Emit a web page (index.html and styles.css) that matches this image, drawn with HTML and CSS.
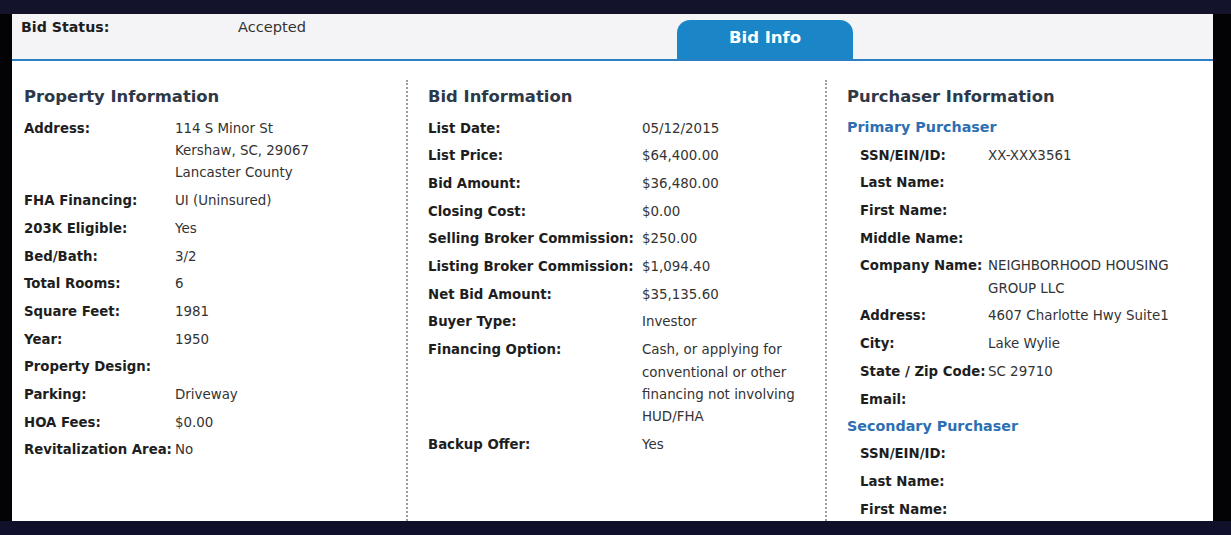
FILE: index.html
```html
<!DOCTYPE html>
<html lang="en">
  <head>
    <meta charset="UTF-8" />
    <meta name="viewport" content="width=device-width, initial-scale=1.0" />
    <title>Bid Info</title>
    <link rel="stylesheet" href="styles.css">
  </head>
  <body>
    <div class="screen">
      <header class="status-bar">
        <div class="status">
          <span class="status-label">Bid Status:</span>
          <span class="status-value">Accepted</span>
        </div>
        <div class="tab">Bid Info</div>
      </header>

      <main class="columns">
        <!-- Property -->
        <section class="col col-property">
          <h2>Property Information</h2>
          <dl class="rows">
            <dt>Address:</dt>
            <dd>114 S Minor St<br>Kershaw, SC, 29067<br>Lancaster County</dd>
            <dt>FHA Financing:</dt>
            <dd>UI (Uninsured)</dd>
            <dt>203K Eligible:</dt>
            <dd>Yes</dd>
            <dt>Bed/Bath:</dt>
            <dd>3/2</dd>
            <dt>Total Rooms:</dt>
            <dd>6</dd>
            <dt>Square Feet:</dt>
            <dd>1981</dd>
            <dt>Year:</dt>
            <dd>1950</dd>
            <dt>Property Design:</dt>
            <dd></dd>
            <dt>Parking:</dt>
            <dd>Driveway</dd>
            <dt>HOA Fees:</dt>
            <dd>$0.00</dd>
            <dt>Revitalization Area:</dt>
            <dd>No</dd>
          </dl>
        </section>

        <!-- Bid -->
        <section class="col col-bid">
          <h2>Bid Information</h2>
          <dl class="rows">
            <dt>List Date:</dt>
            <dd>05/12/2015</dd>
            <dt>List Price:</dt>
            <dd>$64,400.00</dd>
            <dt>Bid Amount:</dt>
            <dd>$36,480.00</dd>
            <dt>Closing Cost:</dt>
            <dd>$0.00</dd>
            <dt>Selling Broker Commission:</dt>
            <dd>$250.00</dd>
            <dt>Listing Broker Commission:</dt>
            <dd>$1,094.40</dd>
            <dt>Net Bid Amount:</dt>
            <dd>$35,135.60</dd>
            <dt>Buyer Type:</dt>
            <dd>Investor</dd>
            <dt>Financing Option:</dt>
            <dd>Cash, or applying for<br>conventional or other<br>financing not involving<br>HUD/FHA</dd>
            <dt>Backup Offer:</dt>
            <dd>Yes</dd>
          </dl>
        </section>

        <!-- Purchaser -->
        <section class="col col-purchaser">
          <h2>Purchaser Information</h2>
          <h3>Primary Purchaser</h3>
          <dl class="rows">
            <dt>SSN/EIN/ID:</dt>
            <dd>XX-XXX3561</dd>
            <dt>Last Name:</dt>
            <dd></dd>
            <dt>First Name:</dt>
            <dd></dd>
            <dt>Middle Name:</dt>
            <dd></dd>
            <dt>Company Name:</dt>
            <dd>NEIGHBORHOOD HOUSING<br>GROUP LLC</dd>
            <dt>Address:</dt>
            <dd>4607 Charlotte Hwy Suite1</dd>
            <dt>City:</dt>
            <dd>Lake Wylie</dd>
            <dt>State / Zip Code:</dt>
            <dd>SC 29710</dd>
            <dt>Email:</dt>
            <dd></dd>
          </dl>
          <h3>Secondary Purchaser</h3>
          <dl class="rows">
            <dt>SSN/EIN/ID:</dt>
            <dd></dd>
            <dt>Last Name:</dt>
            <dd></dd>
            <dt>First Name:</dt>
            <dd></dd>
          </dl>
        </section>
      </main>
    </div>
  </body>
</html>
```

FILE: styles.css
```css
html,
body {
  height: 535px;
  overflow: hidden;
}

body {
  margin: 0;
  box-sizing: border-box;
  background: #030306;
  border-top: 14px solid #13132b;
  border-bottom: 14px solid #10102a;
  font-family: "DejaVu Sans", Verdana, sans-serif;
  color: #333;
}

.screen {
  margin: 0 18px 0 12px;
  height: 507px;
  overflow: hidden;
  background: #fff;
  display: flex;
  flex-direction: column;
}

/* top bar with tab */
.status-bar {
  flex: 0 0 auto;
  height: 45px;
  background: #f4f4f6;
  border-bottom: 2px solid #2a80c2;
  display: flex;
  align-items: flex-end;
}

.status {
  flex: 0 0 665px;
  align-self: flex-start;
  padding: 4px 0 0 9px;
  box-sizing: border-box;
  display: flex;
  font-size: 14.2px;
  line-height: 18px;
}

.status-label {
  width: 217px;
  font-weight: bold;
  color: #1e1e1e;
}

.status-value {
  font-size: 14.6px;
  color: #333;
}

.tab {
  width: 176px;
  height: 39px;
  background: #1a86c8;
  border-radius: 13px 13px 0 0;
  color: #fff;
  font-weight: bold;
  font-size: 16.5px;
  line-height: 36px;
  text-align: center;
}

/* three columns */
.columns {
  flex: 1;
  display: grid;
  grid-template-columns: 395px 418px 1fr;
  padding-top: 19px;
}

.col {
  padding-left: 12px;
}

.col-bid,
.col-purchaser {
  border-left: 2px dotted #9c9ca2;
  padding-left: 20px;
}

.col-bid {
  margin-left: -1px;
}

h2 {
  margin: 7px 0 8px;
  font-size: 16.4px;
  line-height: 20px;
  color: #2e3948;
}

h3 {
  margin: -2px 0 0;
  font-size: 14.3px;
  line-height: 28px;
  color: #2d6fb2;
}

.col-purchaser .rows + h3 {
  margin-top: -2px;
}

.rows {
  margin: 0;
  display: grid;
  font-size: 13.4px;
  line-height: 22.4px;
}

.rows dt,
.rows dd {
  margin: 0;
  padding: 2.65px 0;
  min-height: 22.4px;
}

.rows dt {
  font-weight: bold;
  color: #1e1e1e;
  font-size: 13.3px;
}

.col-property .rows {
  grid-template-columns: 151px 1fr;
}

.col-bid .rows {
  grid-template-columns: 214px 1fr;
}

.col-purchaser .rows {
  grid-template-columns: 128px 1fr;
  padding-left: 13px;
}

.col-purchaser h3 + .rows {
  margin-top: 1px;
}
```
